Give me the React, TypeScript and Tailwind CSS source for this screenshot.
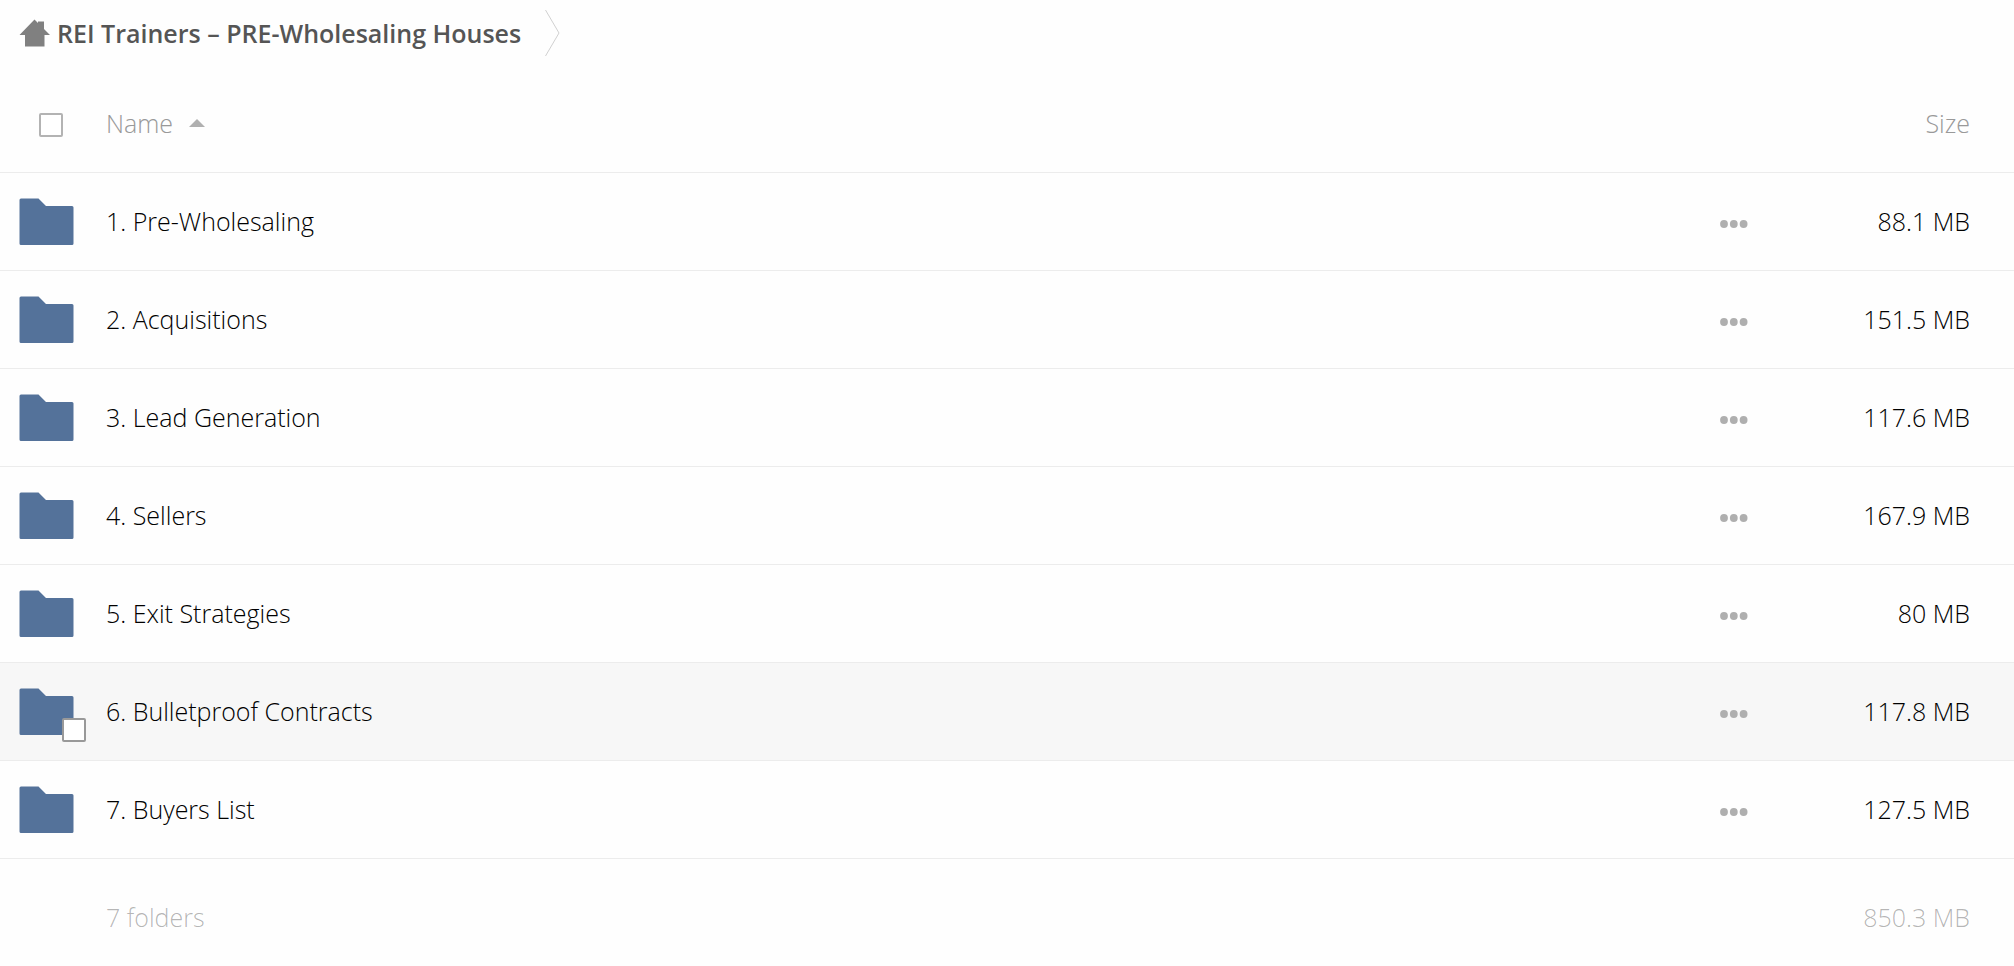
import React, { useState } from 'react';

interface Folder {
    name: string;
    size: string;
}

const folders: Folder[] = [
    { name: '1. Pre-Wholesaling', size: '88.1 MB' },
    { name: '2. Acquisitions', size: '151.5 MB' },
    { name: '3. Lead Generation', size: '117.6 MB' },
    { name: '4. Sellers', size: '167.9 MB' },
    { name: '5. Exit Strategies', size: '80 MB' },
    { name: '6. Bulletproof Contracts', size: '117.8 MB' },
    { name: '7. Buyers List', size: '127.5 MB' }
];

function HomeIcon() {
    return (
        <svg width="31" height="28" viewBox="0 0 31 28" fill="#808080" aria-hidden="true">
            <path d="M15.5 0.5L19 4V2.5H25V10L31 16H25.5V27.5H6V16H0.5Z" />
        </svg>
    );
}

function FolderIcon() {
    return (
        <svg className="block" width="55" height="48" viewBox="0 0 55 48" fill="#54729a" aria-hidden="true">
            <path d="M2 0.5H19.5L27 8H53Q54.5 8 54.5 9.5V45.5Q54.5 47 53 47H2Q0.5 47 0.5 45.5V2Q0.5 0.5 2 0.5Z" />
        </svg>
    );
}

function DotsIcon() {
    return (
        <svg className="block" width="28" height="8" viewBox="0 0 28 8" fill="#afafaf" aria-hidden="true">
            <circle cx="4" cy="4" r="3.9" />
            <circle cx="13.8" cy="4" r="3.9" />
            <circle cx="23.6" cy="4" r="3.9" />
        </svg>
    );
}

export default function App() {
    const [active, setActive] = useState(5);
    const [selected, setSelected] = useState<string[]>([]);

    const toggle = (name: string) => {
        setSelected(selected.includes(name) ? selected.filter((n) => n !== name) : [...selected, name]);
    };

    const toggleAll = () => {
        setSelected(selected.length === folders.length ? [] : folders.map((f) => f.name));
    };

    return (
        <div className="min-h-screen bg-[#fefefe] font-['Open_Sans',sans-serif] text-[25px] leading-9 font-light text-black">
            {/* Breadcrumb */}
            <nav className="flex h-[66px] items-center pl-[19px]" aria-label="Breadcrumb">
                <a href="#" className="flex items-center gap-[7px] font-semibold text-[#555]">
                    <HomeIcon />
                    <span>REI Trainers – PRE-Wholesaling Houses</span>
                </a>
                <svg className="ml-6" width="15" height="48" viewBox="0 0 15 48" fill="none" stroke="#d0d0d0" aria-hidden="true">
                    <path d="M0.5 1L14 24L0.5 47" />
                </svg>
            </nav>

            <table className="w-full border-collapse">
                <thead>
                    <tr className="h-[106px] border-b border-[#ececec] text-[#999]">
                        <th className="w-[106px] pt-3 pl-[39px] text-left">
                            <input
                                type="checkbox"
                                aria-label="Select all"
                                checked={selected.length === folders.length}
                                onChange={toggleAll}
                                className="block size-6 appearance-none rounded-xs border-2 border-[#b3b3b3] bg-white checked:bg-[#54729a]"
                            />
                        </th>
                        <th className="pt-2 text-left font-light">
                            <button className="flex items-center gap-4">
                                Name
                                <svg width="16" height="8" viewBox="0 0 16 8" fill="#b0b0b0" aria-hidden="true">
                                    <path d="M8 0L16 8H0Z" />
                                </svg>
                            </button>
                        </th>
                        <th className="w-16" />
                        <th className="w-[230px] pt-2 pr-11 text-right font-light">Size</th>
                    </tr>
                </thead>
                <tbody>
                    {folders.map((f, i) => (
                        <tr
                            key={f.name}
                            onMouseEnter={() => setActive(i)}
                            className={`h-[98px] border-b border-[#ececec] ${i === active ? 'bg-[#f7f7f7]' : ''}`}
                        >
                            <td className="pt-px pl-[19px]">
                                <div className="relative w-[55px]">
                                    <FolderIcon />
                                    {(i === active || selected.includes(f.name)) && (
                                        <input
                                            type="checkbox"
                                            aria-label={`Select ${f.name}`}
                                            checked={selected.includes(f.name)}
                                            onChange={() => toggle(f.name)}
                                            className="absolute -right-3 -bottom-1.5 size-6 appearance-none rounded-xs border-2 border-[#999] bg-white checked:bg-[#54729a]"
                                        />
                                    )}
                                </div>
                            </td>
                            <td>
                                <a href="#">{f.name}</a>
                            </td>
                            <td>
                                <button aria-label={`Actions for ${f.name}`} className="block pt-1.5">
                                    <DotsIcon />
                                </button>
                            </td>
                            <td className="pr-11 text-right">{f.size}</td>
                        </tr>
                    ))}
                </tbody>
                <tfoot>
                    <tr className="h-[107px] text-black/30">
                        <td />
                        <td className="pt-2.5">7 folders</td>
                        <td />
                        <td className="pt-2.5 pr-11 text-right">850.3 MB</td>
                    </tr>
                </tfoot>
            </table>
        </div>
    );
}
